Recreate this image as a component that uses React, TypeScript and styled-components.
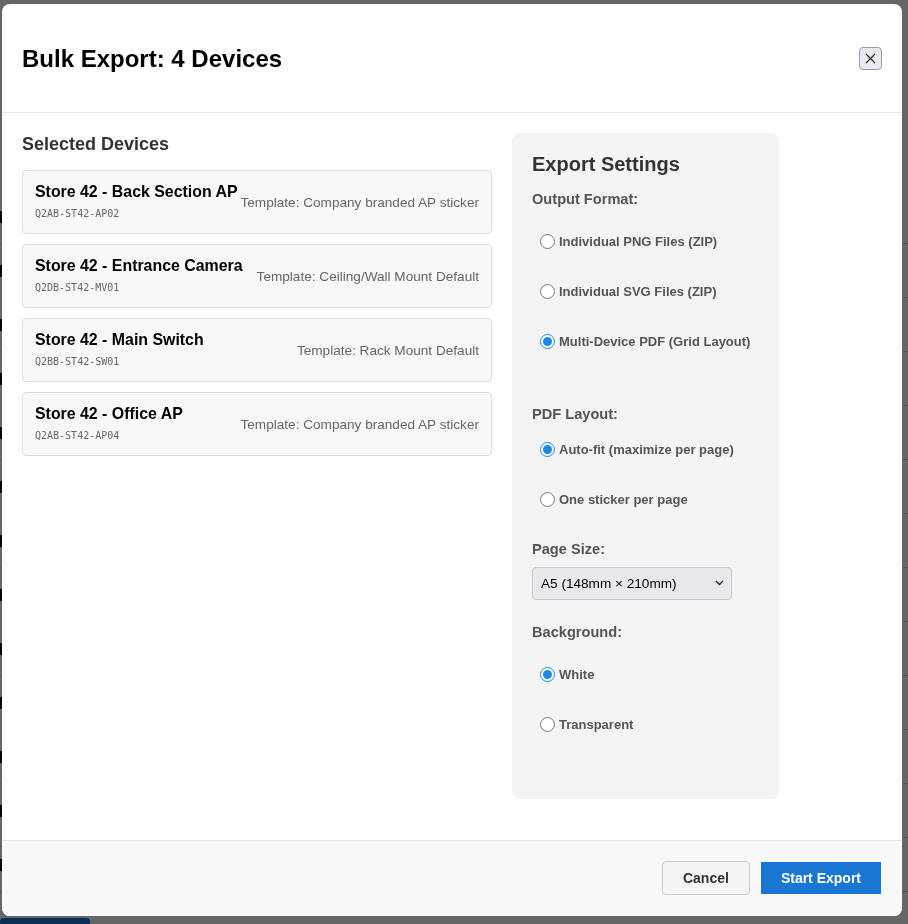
import React from 'react';
import styled, { createGlobalStyle } from 'styled-components';

const GlobalStyle = createGlobalStyle`
  html, body {
    margin: 0;
    padding: 0;
    background: #ffffff;
    font-family: "Liberation Sans", Arial, sans-serif;
  }
`;

// page that sits behind the dialog; only its edges show
const Page = styled.div`
  width: 908px;
  height: 924px;
  padding-top: 190px;
  box-sizing: border-box;
  overflow: hidden;
`;

const PageRow = styled.div`
  height: 53px;
  display: flex;
  align-items: center;
  border-bottom: 1px solid #dddddd;
`;

const PageCell = styled.div<{ $w: number }>`
  width: ${(p) => p.$w}px;
  height: 12px;
  background: #111;
`;

const PageButton = styled.div`
  position: absolute;
  left: 0;
  top: 918px;
  width: 90px;
  height: 30px;
  border-radius: 4px;
  background: #1976d2;
`;

const Overlay = styled.div`
  position: fixed;
  inset: 0;
  background: rgba(0, 0, 0, 0.6);
  display: flex;
  align-items: flex-start;
  padding: 4px 0 0 2px;
`;

const Modal = styled.div`
  width: 900px;
  height: 912px;
  background: #ffffff;
  border-radius: 8px;
  display: flex;
  flex-direction: column;
  overflow: hidden;
`;

const Header = styled.div`
  display: flex;
  align-items: center;
  justify-content: space-between;
  padding: 20px;
  border-bottom: 1px solid #e6e6e6;
`;

const Title = styled.h2`
  margin: 21px 0 19px;
  font-size: 24px;
  line-height: 28px;
  font-weight: bold;
  color: #000;
`;

const CloseButton = styled.button`
  width: 23px;
  height: 23px;
  padding: 0;
  border: 1px solid #9a9aa6;
  border-radius: 4px;
  background: #e9e9ef;
  display: flex;
  align-items: center;
  justify-content: center;
`;

const Body = styled.div`
  flex: 1;
  display: grid;
  grid-template-columns: 470px 267px;
  column-gap: 20px;
  align-items: start;
  padding: 20px;
`;

const DeviceColumn = styled.div`
  display: flex;
  flex-direction: column;
`;

const SectionTitle = styled.h3`
  margin: 1px 0 15px;
  font-size: 18px;
  line-height: 21px;
  font-weight: bold;
  color: #333;
`;

const DeviceList = styled.div`
  display: flex;
  flex-direction: column;
  gap: 10px;
`;

const DeviceCard = styled.div`
  display: flex;
  align-items: center;
  justify-content: space-between;
  padding: 12px;
  background: #f8f8f8;
  border: 1px solid #dedede;
  border-radius: 4px;
`;

const DeviceInfo = styled.div`
  display: flex;
  flex-direction: column;
`;

const DeviceName = styled.div`
  font-size: 15.9px;
  line-height: 18px;
  font-weight: bold;
  color: #000;
  white-space: nowrap;
`;

const DeviceId = styled.div`
  margin-top: 6px;
  font-family: "DejaVu Sans Mono", "Liberation Mono", monospace;
  font-size: 10px;
  line-height: 14px;
  color: #666;
`;

const TemplateName = styled.div`
  font-size: 13.6px;
  color: #666;
  white-space: nowrap;
`;

const SettingsPanel = styled.div`
  background: #f4f4f4;
  border-radius: 8px;
  padding: 20px 20px 50px;
  height: 666px;
  box-sizing: border-box;
`;

const PanelTitle = styled.h3`
  margin: 0 0 15px;
  font-size: 20px;
  line-height: 23px;
  font-weight: bold;
  color: #333;
`;

const FieldLabel = styled.div<{ $top?: number }>`
  margin-top: ${(p) => p.$top ?? 0}px;
  font-size: 14.6px;
  line-height: 17px;
  font-weight: bold;
  color: #555;
`;

const RadioGroup = styled.div<{ $top?: number }>`
  margin-top: ${(p) => p.$top ?? 0}px;
  display: flex;
  flex-direction: column;
`;

const RadioOption = styled.label`
  display: flex;
  align-items: center;
  height: 50px;
  padding-left: 8px;
  font-size: 13px;
  font-weight: bold;
  color: #555;
  cursor: pointer;

  input {
    width: 15px;
    height: 15px;
    margin: 0 4px 0 0;
    accent-color: #1e88e5;
  }
`;

const SelectWrap = styled.div`
  position: relative;
  margin-top: 9px;
  width: 200px;
`;

const Select = styled.select`
  appearance: none;
  width: 200px;
  height: 33px;
  padding: 0 24px 0 8px;
  border: 1px solid #c8c8cc;
  border-radius: 4px;
  background: #e9e9ed;
  font-family: "Liberation Sans", Arial, sans-serif;
  font-size: 13.6px;
  color: #000;
`;

const Chevron = styled.svg`
  position: absolute;
  right: 8px;
  top: 13px;
  pointer-events: none;
`;

const Footer = styled.div`
  display: flex;
  justify-content: flex-end;
  align-items: center;
  gap: 11px;
  padding: 20px 21px 21px 20px;
  background: #f8f8f8;
  border-top: 1px solid #e6e6e6;
`;

const Button = styled.button<{ $primary?: boolean }>`
  height: ${(p) => (p.$primary ? 32 : 34)}px;
  padding: 0 20px;
  border: ${(p) => (p.$primary ? 'none' : '1px solid #cccccc')};
  border-radius: ${(p) => (p.$primary ? 0 : 4)}px;
  background: ${(p) => (p.$primary ? '#1976d2' : '#f4f4f4')};
  color: ${(p) => (p.$primary ? '#ffffff' : '#333')};
  font-family: "Liberation Sans", Arial, sans-serif;
  font-size: 14px;
  font-weight: bold;
  cursor: pointer;
`;

const devices = [
  { name: 'Store 42 - Back Section AP', id: 'Q2AB-ST42-AP02', template: 'Company branded AP sticker' },
  { name: 'Store 42 - Entrance Camera', id: 'Q2DB-ST42-MV01', template: 'Ceiling/Wall Mount Default' },
  { name: 'Store 42 - Main Switch', id: 'Q2BB-ST42-SW01', template: 'Rack Mount Default' },
  { name: 'Store 42 - Office AP', id: 'Q2AB-ST42-AP04', template: 'Company branded AP sticker' },
];

const pageRowWidths = [40, 60, 50, 70, 45, 55, 40, 65, 50, 60, 45, 55, 40];

export default function App() {
  return (
    <>
      <GlobalStyle />
      <Page>
        {pageRowWidths.map((w, i) => (
          <PageRow key={i}>
            <PageCell $w={w} />
          </PageRow>
        ))}
        <PageButton />
      </Page>
      <Overlay>
        <Modal>
          <Header>
            <Title>Bulk Export: 4 Devices</Title>
            <CloseButton aria-label="Close">
              <svg width="11" height="11" viewBox="0 0 11 11">
                <path d="M1 1 L10 10 M10 1 L1 10" stroke="#222" strokeWidth="1.1" />
              </svg>
            </CloseButton>
          </Header>
          <Body>
            <DeviceColumn>
              <SectionTitle>Selected Devices</SectionTitle>
              <DeviceList>
                {devices.map((d) => (
                  <DeviceCard key={d.id}>
                    <DeviceInfo>
                      <DeviceName>{d.name}</DeviceName>
                      <DeviceId>{d.id}</DeviceId>
                    </DeviceInfo>
                    <TemplateName>Template: {d.template}</TemplateName>
                  </DeviceCard>
                ))}
              </DeviceList>
            </DeviceColumn>
            <SettingsPanel>
              <PanelTitle>Export Settings</PanelTitle>
              <FieldLabel>Output Format:</FieldLabel>
              <RadioGroup $top={8}>
                <RadioOption>
                  <input type="radio" name="format" />
                  Individual PNG Files (ZIP)
                </RadioOption>
                <RadioOption>
                  <input type="radio" name="format" />
                  Individual SVG Files (ZIP)
                </RadioOption>
                <RadioOption>
                  <input type="radio" name="format" defaultChecked />
                  Multi-Device PDF (Grid Layout)
                </RadioOption>
              </RadioGroup>
              <FieldLabel $top={40}>PDF Layout:</FieldLabel>
              <RadioGroup $top={1}>
                <RadioOption>
                  <input type="radio" name="layout" defaultChecked />
                  Auto-fit (maximize per page)
                </RadioOption>
                <RadioOption>
                  <input type="radio" name="layout" />
                  One sticker per page
                </RadioOption>
              </RadioGroup>
              <FieldLabel $top={17}>Page Size:</FieldLabel>
              <SelectWrap>
                <Select defaultValue="a5">
                  <option value="a5">A5 (148mm × 210mm)</option>
                  <option value="a4">A4 (210mm × 297mm)</option>
                  <option value="letter">Letter (8.5in × 11in)</option>
                </Select>
                <Chevron width="9" height="6" viewBox="0 0 9 6">
                  <path d="M1 1 L4.5 4.5 L8 1" fill="none" stroke="#222" strokeWidth="1.3" />
                </Chevron>
              </SelectWrap>
              <FieldLabel $top={24}>Background:</FieldLabel>
              <RadioGroup $top={8}>
                <RadioOption>
                  <input type="radio" name="bg" defaultChecked />
                  White
                </RadioOption>
                <RadioOption>
                  <input type="radio" name="bg" />
                  Transparent
                </RadioOption>
              </RadioGroup>
            </SettingsPanel>
          </Body>
          <Footer>
            <Button>Cancel</Button>
            <Button $primary>Start Export</Button>
          </Footer>
        </Modal>
      </Overlay>
    </>
  );
}
